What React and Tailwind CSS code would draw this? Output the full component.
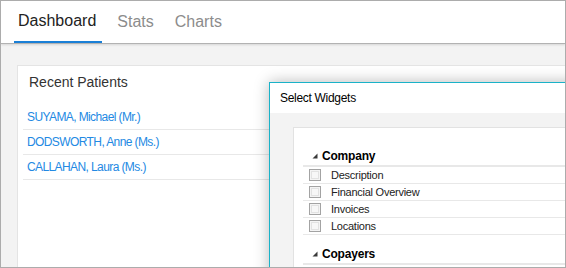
import React from "react";

const font = { fontFamily: '"Liberation Sans", Arial, sans-serif' };

function Tri() {
  return (
    <svg width="6" height="6" viewBox="0 0 6 6" className="block">
      <polygon points="5.5,0.5 5.5,5.5 0.5,5.5" fill="#3a3a3a" />
    </svg>
  );
}

function Check() {
  return (
    <div className="w-[12px] h-[12px] border border-[#a3a3a3] bg-[#f4f4f4] p-[1px]">
      <div className="w-full h-full border border-[#e2e2e2] bg-[#f7f7f7]" />
    </div>
  );
}

function Group({ title, items, className = "" }) {
  return (
    <div className={className}>
      <div className="h-[20px] flex items-center border-b-2 border-[#e8e8e8] pl-[9px]">
        <Tri />
        <span className="ml-[4px] text-[12px] font-bold text-black leading-none tracking-[-0.2px]">{title}</span>
      </div>
      {items.map((it, i) => (
        <div key={i} className="h-[17px] flex items-center border-b border-[#e8e8e8] pl-[6px]">
          <Check />
          {it ? (
            <span className="ml-[10px] text-[11px] text-[#222] leading-none tracking-[-0.25px]">{it}</span>
          ) : null}
        </div>
      ))}
    </div>
  );
}

export default function App() {
  const patients = ["SUYAMA, Michael (Mr.)", "DODSWORTH, Anne (Ms.)", "CALLAHAN, Laura (Ms.)"];
  return (
    <div style={font} className="relative w-[566px] h-[268px] overflow-hidden border border-[#acacac] bg-[#f3f3f3]">
      <div className="h-[43px] bg-white border-b border-[#b2b2b2] shadow-[0_1px_2px_rgba(0,0,0,0.12)] flex pl-[13px] gap-[11px] relative z-10">
        <div className="h-full flex items-center pl-[4px] pr-[6px] border-b-2 border-[#1a7fd6] text-[16px] text-[#222]">Dashboard</div>
        <div className="h-full flex items-center pl-[4px] pr-[6px] text-[16px] text-[#8c8c8c]">Stats</div>
        <div className="h-full flex items-center pl-[4px] pr-[6px] text-[16px] text-[#8c8c8c]">Charts</div>
      </div>
      <div className="pt-[21px] pl-[16px]">
        <div className="w-[700px] h-[300px] bg-white border border-[#e4e4e4]">
          <div className="h-[39px] pt-[8px] pl-[11px] text-[14px] leading-[16px] text-[#333]">Recent Patients</div>
          <div className="ml-[5px]">
            {patients.map((p) => (
              <div key={p} className="h-[25px] border-b border-[#e8e8e8] flex items-center pl-[4px] text-[12px] tracking-[-0.6px] text-[#2389e3]">
                {p}
              </div>
            ))}
          </div>
        </div>
      </div>
      <div className="absolute left-[268px] top-[81px] w-[420px] h-[300px] border-l border-t border-[#1ab2c8] bg-[#f3f3f3] shadow-[0_0_14px_rgba(0,0,0,0.28)] z-20">
        <div className="h-[30px] bg-white flex items-center pl-[10px] text-[12px] tracking-[-0.3px] text-black">Select Widgets</div>
        <div className="pt-[14px] pl-[23px]">
          <div className="h-[300px] bg-white border-l border-t border-[#e2e2e2] pt-[19px] pl-[9px]">
            <Group title="Company" items={["Description", "Financial Overview", "Invoices", "Locations"]} />
            <Group className="mt-[10px]" title="Copayers" items={["", ""]} />
          </div>
        </div>
      </div>
    </div>
  );
}
